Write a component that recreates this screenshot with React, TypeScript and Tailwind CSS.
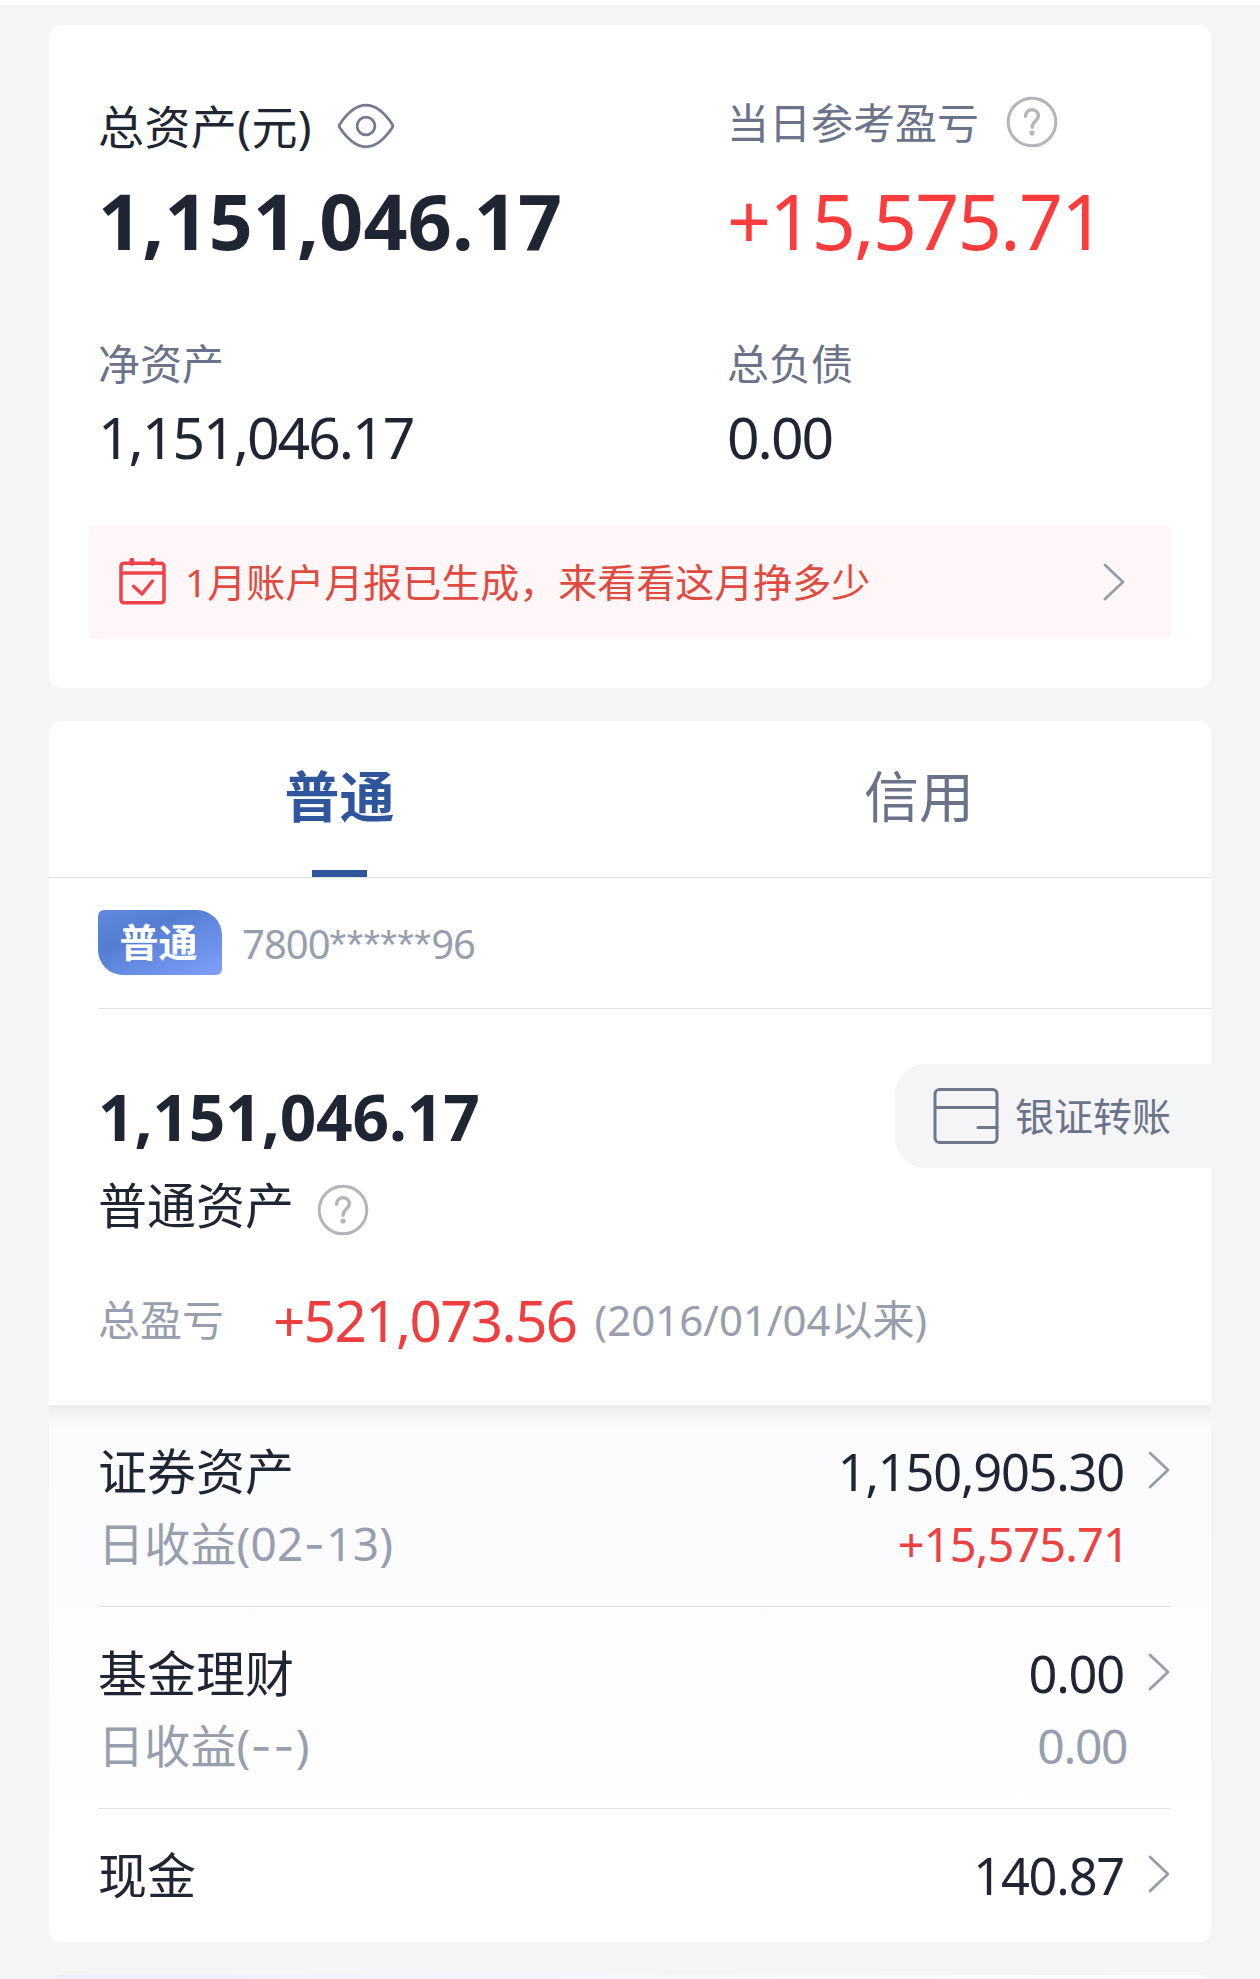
const holdings = [
  {
    name: "证券资产",
    value: "1,150,905.30",
    note: ["(02", "-", "13)"],
    change: "+15,575.71",
    changeClass: "mr-[1px] text-[47px] tracking-[-0.9px] text-[#ec4141]",
  },
  {
    name: "基金理财",
    value: "0.00",
    note: ["(", "--", ")"],
    change: "0.00",
    changeClass: "mr-[3px] text-[48px] tracking-[-1.4px] text-[#979eae]",
  },
  {
    name: "现金",
    value: "140.87",
  },
];

function QuestionIcon() {
  return (
    <svg width="52" height="52" viewBox="0 0 52 52" fill="none" className="shrink-0">
      <circle cx="26" cy="26" r="23.8" stroke="#b4b5bb" strokeWidth="3" />
      <path
        d="M19.6 20.2c0-3.9 2.8-6.5 6.4-6.5s6.4 2.6 6.4 6c0 4.9-6.3 5.8-6.3 11.6"
        stroke="#b4b5bb"
        strokeWidth="3.4"
        strokeLinecap="round"
      />
      <circle cx="26" cy="37" r="2.6" fill="#b4b5bb" />
    </svg>
  );
}

function EyeIcon() {
  return (
    <svg width="58" height="46" viewBox="0 0 58 46" fill="none" className="shrink-0">
      <path
        d="M2.8 24.8q-1.2-1.8 0-3.6C9 12 18.5 2.2 29 2.2s20 9.8 26.2 19q1.2 1.8 0 3.6C49 34 39.5 43.8 29 43.8S9 34 2.8 24.8Z"
        stroke="#747c92"
        strokeWidth="2.8"
      />
      <circle cx="29" cy="23" r="8.9" stroke="#747c92" strokeWidth="2.8" />
    </svg>
  );
}

function CalendarIcon() {
  return (
    <svg width="48" height="48" viewBox="0 0 48 48" fill="none" stroke="#ec444a" strokeWidth="3.5" className="shrink-0">
      <rect x="2" y="6.2" width="43" height="39.6" rx="3" />
      <path d="M2 16h43" />
      <path d="M12.8 3.2v3M33.8 3.2v3" strokeWidth="5" strokeLinecap="round" />
      <path d="M14.6 29.2l8.4 7.8L33.4 24" strokeWidth="3.4" strokeLinecap="round" strokeLinejoin="round" />
    </svg>
  );
}

function WalletIcon() {
  return (
    <svg width="66" height="58" viewBox="0 0 66 58" fill="none" stroke="#6f758a" strokeWidth="3" className="shrink-0">
      <rect x="2" y="2.4" width="62" height="53" rx="4.5" />
      <path d="M2 20.6h62" />
      <path d="M45 40.4h19" strokeLinecap="round" />
    </svg>
  );
}

function Chevron() {
  return (
    <svg width="22" height="38" viewBox="0 0 22 38" fill="none" className="shrink-0">
      <path d="M2 2l18 17L2 36" stroke="#979cab" strokeWidth="2.8" strokeLinecap="round" strokeLinejoin="round" />
    </svg>
  );
}

function SummaryCard() {
  return (
    <section className="h-[663px] rounded-[12px] bg-white pt-[71px]">
      <div className="flex pl-[49px]">
        <div className="w-[629px]">
          <div className="flex h-[60px] items-center gap-[25px]">
            <span className="text-[46px] tracking-[0.4px]">总资产(元)</span>
            <EyeIcon />
          </div>
          <p className="mt-[20px] text-[77px] leading-[90px] font-bold tracking-[0.2px]">1,151,046.17</p>
          <p className="mt-[73px] text-[42px] leading-[50px] text-[#6a7389]">净资产</p>
          <p className="mt-[16px] text-[57px] leading-[64px] tracking-[-2px]">1,151,046.17</p>
        </div>
        <div>
          <div className="flex h-[60px] items-center gap-[27px] pb-[8px]">
            <span className="text-[42px] text-[#6a7389]">当日参考盈亏</span>
            <QuestionIcon />
          </div>
          <p className="mt-[20px] text-[77px] leading-[90px] tracking-[-1.7px] text-[#fa3c3c]">+15,575.71</p>
          <p className="mt-[73px] text-[42px] leading-[50px] text-[#6a7389]">总负债</p>
          <p className="mt-[16px] text-[57px] leading-[64px] tracking-[-2px]">0.00</p>
        </div>
      </div>
      <div className="mx-[39px] mt-[56px] flex h-[114px] items-center rounded-[7px] bg-[#fff6f7] pr-[47px] pl-[31px]">
        <div className="pb-[3px]">
          <CalendarIcon />
        </div>
        <span className="ml-[18px] flex-1 text-[39px] text-[#df4a41]">1月账户月报已生成，来看看这月挣多少</span>
        <div className="pb-[1px]">
          <Chevron />
        </div>
      </div>
    </section>
  );
}

function Tabs() {
  return (
    <div className="grid h-[157px] grid-cols-2 border-b border-[#e0e2e6] text-[55px]">
      <div className="flex flex-col items-center justify-between font-bold text-[#2f559c]">
        <span className="leading-[150px]">普通</span>
        <span className="-mt-[1px] h-[7px] w-[55px] shrink-0 bg-[#2f559c]" />
      </div>
      <div className="pr-[3px] text-center leading-[150px] text-[#6a7389]">信用</div>
    </div>
  );
}

function AccountCard() {
  return (
    <section className="mt-[33px] h-[1221px] overflow-hidden rounded-[12px] bg-white">
      <Tabs />
      <div className="ml-[49px] flex h-[131px] items-center border-b border-[#e0e2e6] pb-[1px]">
        <span className="flex h-[65px] w-[124px] items-center justify-center rounded-[6px] rounded-tr-[25px] rounded-bl-[25px] bg-linear-[155deg,#6088dc_0%,#557ed3_35%,#7fa0fb_100%] pr-[3px] text-[39px] font-bold text-white">
          普通
        </span>
        <span className="ml-[20px] pt-[2px] text-[40px] tracking-[-1px] text-[#979eae]">
          7800
          <span className="font-['Liberation_Sans'] text-[43px] leading-none tracking-[0.2px]">******</span>
          96
        </span>
      </div>

      <div className="h-[396px] pt-[55px]">
        <div className="flex items-start justify-between">
          <div className="pt-[17px] pl-[49px]">
            <p className="text-[64px] leading-[72px] font-bold tracking-[-0.2px]">1,151,046.17</p>
            <div className="mt-[20px] flex h-[64px] items-center gap-[23px]">
              <span className="pt-[1px] text-[49px]">普通资产</span>
              <span className="pt-[9px]">
                <QuestionIcon />
              </span>
            </div>
          </div>
          <div className="flex h-[104px] w-[316px] items-center gap-[16px] rounded-l-[30px] bg-[#f3f5f7] pl-[38px]">
            <WalletIcon />
            <span className="text-[39px] text-[#6a7389]">银证转账</span>
          </div>
        </div>
        <div className="mt-[52px] flex h-[60px] items-center pl-[49px] text-[42px] text-[#979eae]">
          <span>总盈亏</span>
          <span className="ml-[49px] pt-[3px] text-[56.5px] leading-[60px] tracking-[-1.6px] text-[#f03e3e]">+521,073.56</span>
          <span className="ml-[18px]">(2016/01/04以来)</span>
        </div>
      </div>

      <div className="h-[537px] bg-linear-[180deg,#ebecee_0px,#f2f3f5_10px,#fafbfd_22px,#fcfcfe_200px,#ffffff_450px]">
        {holdings.map((item) => (
          <div
            key={item.name}
            className="mr-[40px] ml-[49px] flex h-[202px] justify-between border-b border-[#dfe1e5] pt-[30px] last:border-b-0"
          >
            <div>
              <p className="text-[49px] leading-[72px]">{item.name}</p>
              {item.note && (
                <p className="text-[46px] leading-[72px] tracking-[0.2px] text-[#979eae]">
                  日收益{item.note[0]}
                  <span className="font-['Inter'] tracking-[1.4px]">{item.note[1]}</span>
                  {item.note[2]}
                </p>
              )}
            </div>
            <div className="flex">
              <div className="pt-[1px] text-right">
                <p className="mr-[6px] text-[50.5px] leading-[72px] tracking-[-1.2px]">{item.value}</p>
                {item.change && <p className={`leading-[72px] ${item.changeClass}`}>{item.change}</p>}
              </div>
              <div className="ml-[18px] pt-[16px] pr-[1px]">
                <Chevron />
              </div>
            </div>
          </div>
        ))}
      </div>
    </section>
  );
}

export default function App() {
  return (
    <main
      lang="zh-CN"
      className="h-[1979px] w-[1260px] overflow-hidden border-t-[5px] border-white bg-[#f3f5f7] px-[49px] pt-[20px] font-['Noto_Sans','Noto_Sans_CJK_SC',sans-serif] whitespace-nowrap text-[#1f2533]"
    >
      <SummaryCard />
      <AccountCard />
      <section className="mt-[33px] h-[40px] rounded-[12px] bg-linear-to-r from-[#ebeffb] to-white" />
    </main>
  );
}
